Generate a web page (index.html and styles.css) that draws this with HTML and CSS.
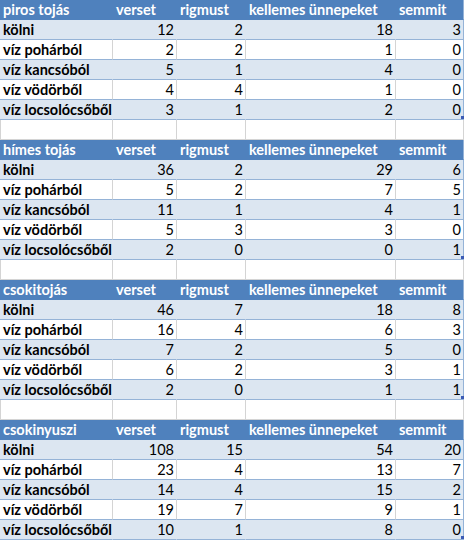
FILE: index.html
```html
<!DOCTYPE html>
<html>
<head>
  <title>Húsvéti locsolás</title>
  <link rel="stylesheet" href="styles.css">
</head>
<body>
  <div class="sheet">

    <div class="block">
      <div class="row head"><div>piros tojás</div><div>verset</div><div>rigmust</div><div>kellemes ünnepeket</div><div>semmit</div></div>
      <div class="row band"><div>kölni</div><div>12</div><div>2</div><div>18</div><div>3</div></div>
      <div class="row"><div>víz pohárból</div><div>2</div><div>2</div><div>1</div><div>0</div></div>
      <div class="row band"><div>víz kancsóból</div><div>5</div><div>1</div><div>4</div><div>0</div></div>
      <div class="row"><div>víz vödörből</div><div>4</div><div>4</div><div>1</div><div>0</div></div>
      <div class="row band last"><div>víz locsolócsőből</div><div>3</div><div>1</div><div>2</div><div>0</div></div>
      <div class="row empty"><div></div><div></div><div></div><div></div><div></div></div>
    </div>

    <div class="block">
      <div class="row head"><div>hímes tojás</div><div>verset</div><div>rigmust</div><div>kellemes ünnepeket</div><div>semmit</div></div>
      <div class="row band"><div>kölni</div><div>36</div><div>2</div><div>29</div><div>6</div></div>
      <div class="row"><div>víz pohárból</div><div>5</div><div>2</div><div>7</div><div>5</div></div>
      <div class="row band"><div>víz kancsóból</div><div>11</div><div>1</div><div>4</div><div>1</div></div>
      <div class="row"><div>víz vödörből</div><div>5</div><div>3</div><div>3</div><div>0</div></div>
      <div class="row band last"><div>víz locsolócsőből</div><div>2</div><div>0</div><div>0</div><div>1</div></div>
      <div class="row empty"><div></div><div></div><div></div><div></div><div></div></div>
    </div>

    <div class="block">
      <div class="row head"><div>csokitojás</div><div>verset</div><div>rigmust</div><div>kellemes ünnepeket</div><div>semmit</div></div>
      <div class="row band"><div>kölni</div><div>46</div><div>7</div><div>18</div><div>8</div></div>
      <div class="row"><div>víz pohárból</div><div>16</div><div>4</div><div>6</div><div>3</div></div>
      <div class="row band"><div>víz kancsóból</div><div>7</div><div>2</div><div>5</div><div>0</div></div>
      <div class="row"><div>víz vödörből</div><div>6</div><div>2</div><div>3</div><div>1</div></div>
      <div class="row band last"><div>víz locsolócsőből</div><div>2</div><div>0</div><div>1</div><div>1</div></div>
      <div class="row empty"><div></div><div></div><div></div><div></div><div></div></div>
    </div>

    <div class="block">
      <div class="row head"><div>csokinyuszi</div><div>verset</div><div>rigmust</div><div>kellemes ünnepeket</div><div>semmit</div></div>
      <div class="row band"><div>kölni</div><div>108</div><div>15</div><div>54</div><div>20</div></div>
      <div class="row"><div>víz pohárból</div><div>23</div><div>4</div><div>13</div><div>7</div></div>
      <div class="row band"><div>víz kancsóból</div><div>14</div><div>4</div><div>15</div><div>2</div></div>
      <div class="row"><div>víz vödörből</div><div>19</div><div>7</div><div>9</div><div>1</div></div>
      <div class="row band last"><div>víz locsolócsőből</div><div>10</div><div>1</div><div>8</div><div>0</div></div>
      <div class="row empty"><div></div><div></div><div></div><div></div><div></div></div>
    </div>

  </div>
</body>
</html>
```

FILE: styles.css
```css
body {
  margin: 0;
  background: white;
  font-family: Lato, "Open Sans", sans-serif;
  font-size: 14.5px;
  color: black;
  overflow: hidden;
}

.sheet {
  width: 465px;
}

.row {
  display: grid;
  grid-template-columns: 113px 64px 69px 150px 68px;
  height: 20px;
  position: relative;
}

.row > div {
  box-sizing: border-box;
  height: 20px;
  line-height: 19px;
  padding: 0 2px 0 3px;
  border-right: 1px solid #d4d4d4;
  border-bottom: 1px solid #95b3d7;
  text-align: right;
  white-space: nowrap;
  overflow: hidden;
}

.row > div:first-child {
  text-align: left;
  font-weight: bold;
}

/* header row of each table */
.head > div {
  background: #4f81bd;
  color: white;
  font-weight: bold;
  text-align: left;
  border-right-color: #4f81bd;
  border-bottom-color: #4f81bd;
}

.head > div:last-child {
  border-right-color: #95b3d7;
}

.band > div {
  background: #dce6f1;
  border-right-color: #dce6f1;
}

.row > div:last-child {
  border-right-color: #95b3d7;
}

/* little resize handle at the table corner */
.last::after {
  content: "";
  position: absolute;
  right: 1px;
  bottom: 1px;
  width: 3px;
  height: 3px;
  background: #3b5bb5;
}

.empty > div {
  border-bottom-color: #d4d4d4;
}

.empty > div:first-child {
  border-left: 1px solid #d4d4d4;
}

.empty > div:last-child {
  border-right-color: #d4d4d4;
}
```
